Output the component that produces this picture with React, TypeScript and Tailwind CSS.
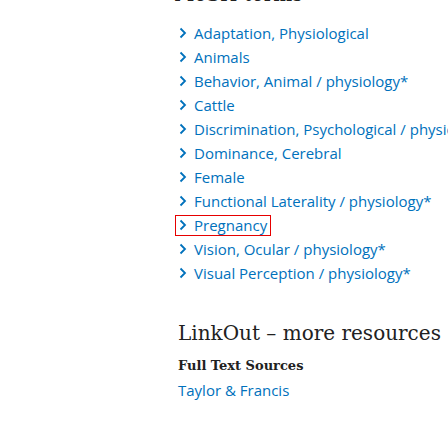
import React from 'react';

const terms = [
    'Adaptation, Physiological',
    'Animals',
    'Behavior, Animal / physiology*',
    'Cattle',
    'Discrimination, Psychological / physiology*',
    'Dominance, Cerebral',
    'Female',
    'Functional Laterality / physiology*',
    'Pregnancy',
    'Vision, Ocular / physiology*',
    'Visual Perception / physiology*',
];

const Chevron: React.FC = () => (
    <svg width="8" height="12" viewBox="0 0 8 12" className="shrink-0">
        <path d="M1.5 1.5 L6 6 L1.5 10.5" fill="none" stroke="#0071bc" strokeWidth="1.8" />
    </svg>
);

const App: React.FC = () => {
    return (
        <div className="w-[448px] h-[448px] overflow-hidden bg-white">
            <div className="pl-[174px] -mt-[17px]">
                <h2 className="font-['DejaVu_Serif',serif] text-[20px] leading-[22px] text-[#212121] whitespace-nowrap">
                    MeSH terms
                </h2>
                <ul className="mt-[16px] font-['Open_Sans',sans-serif] text-[15px] text-[#0071bc] whitespace-nowrap">
                    {terms.map((term) => (
                        <li key={term} className="h-6 flex items-center">
                            <span
                                className={
                                    term === 'Pregnancy'
                                        ? 'flex items-center gap-[7px] ml-[1px] pl-[3px] pr-[3px] h-[21px] border border-[#e60000]'
                                        : 'flex items-center gap-[7px] pl-[5px]'
                                }
                            >
                                <Chevron />
                                <span>{term}</span>
                            </span>
                        </li>
                    ))}
                </ul>
                <h2 className="mt-[33px] pl-[4px] font-['DejaVu_Serif',serif] text-[20px] leading-[30px] text-[#212121] whitespace-nowrap">
                    LinkOut – more resources
                </h2>
                <h3 className="mt-[8px] pl-[4px] font-['DejaVu_Serif',serif] font-bold text-[13px] leading-[20px] text-[#212121]">
                    Full Text Sources
                </h3>
                <a className="block mt-[3px] pl-[4px] font-['Open_Sans',sans-serif] text-[15px] leading-[22px] text-[#0071bc]">
                    Taylor &amp; Francis
                </a>
            </div>
        </div>
    );
};

export default App;
